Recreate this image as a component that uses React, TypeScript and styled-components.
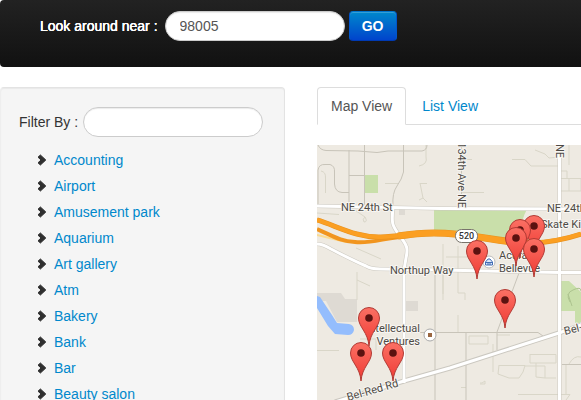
import React from "react";
import styled, { createGlobalStyle, css } from "styled-components";

const GlobalStyle = createGlobalStyle`
  *, *::before, *::after { box-sizing: border-box; }
  html, body { margin: 0; height: 100%; overflow: hidden; background: #fff; }
  body, input, button {
    font-family: "Liberation Sans", Arial, sans-serif;
    font-size: 14px;
    line-height: 20px;
    color: #333;
  }
  a { color: #08c; text-decoration: none; }
`;

const Header = styled.form`
  display: flex;
  align-items: center;
  padding: 11px 40px 26px;
  border-radius: 4px 0 0 4px;
  background: linear-gradient(to bottom, #222, #111);
`;

const FieldLabel = styled.label<{ $light?: boolean }>`
  flex: none;
  margin-right: 5px;
  ${(p) =>
    p.$light &&
    css`
      margin-right: 7px;
      color: #fff;
      text-shadow: 0 0 0 #fff, 0 0 0 #fff;
    `}
`;

const RoundInput = styled.input`
  width: 180px;
  height: 30px;
  padding: 4px 14px;
  border: 1px solid #ccc;
  border-radius: 15px;
  background: #fff;
  color: #555;
  box-shadow: inset 0 1px 1px rgba(0, 0, 0, 0.08);
  outline: none;
`;

const GoButton = styled.button`
  height: 30px;
  min-width: 48px;
  margin-left: 4px;
  padding: 4px 12px;
  border: 1px solid;
  border-color: #0074cc #05c #003ab3;
  border-radius: 4px;
  background: linear-gradient(to bottom, #08c, #04c);
  color: #fff;
  font-weight: bold;
  box-shadow: inset 0 1px 0 rgba(255, 255, 255, 0.2);
`;

const Content = styled.div`
  display: flex;
  align-items: flex-start;
  gap: 32px;
  margin-top: 20px;
`;

const Sidebar = styled.aside`
  flex: none;
  width: 285px;
  padding: 19px 18px;
  border: 1px solid #e3e3e3;
  border-left-color: #eee;
  border-radius: 4px;
  background: #f5f5f5;
  box-shadow: inset 0 1px 1px rgba(0, 0, 0, 0.05);
`;

const FilterRow = styled.div`
  display: flex;
  align-items: center;
`;

const CategoryList = styled.ul`
  margin: 10px 0 0;
  padding: 0 0 0 18px;
  list-style: none;
`;

const Category = styled.li`
  display: flex;
  align-items: center;
  gap: 7px;
  height: 26px;
`;

const Main = styled.main`
  flex: 1;
  min-width: 0;
`;

const Tabs = styled.nav`
  display: flex;
  gap: 2px;
  border-bottom: 1px solid #ddd;
  margin-bottom: 20px;
`;

const Tab = styled.a<{ $active?: boolean }>`
  padding: 8px 13px;
  margin-bottom: -1px;
  border: 1px solid transparent;
  border-radius: 4px 4px 0 0;
  ${(p) =>
    p.$active &&
    css`
      color: #555;
      background: #fff;
      border-color: #ddd #ddd #fff;
    `}
`;

const MapCanvas = styled.svg`
  display: block;
  width: 100%;
  background: #eeeae2;
`;

const MapLabel = styled.text`
  font-family: Roboto, sans-serif;
  font-size: 11px;
  fill: #4d4a45;
  stroke: #f8f6f2;
  stroke-width: 2px;
  stroke-linejoin: round;
  paint-order: stroke;
`;

const RouteNumber = styled.text`
  font-family: Roboto, sans-serif;
  font-size: 9px;
  font-weight: 500;
  fill: #333;
`;

const categories = [
  "Accounting",
  "Airport",
  "Amusement park",
  "Aquarium",
  "Art gallery",
  "Atm",
  "Bakery",
  "Bank",
  "Bar",
  "Beauty salon",
];

const pins = [
  [534, 226],
  [520, 230],
  [516, 238],
  [534, 249],
  [477, 251],
  [505, 300],
  [369, 318],
  [361, 353],
  [393, 353],
];

const whiteRoads = [
  "M317 206L441 208.500L581 209",
  "M393 208C391 225 393 226 399 235C408 246 408 249 406 258L404 270V383",
  "M317 244Q323 244 331 249Q352 260 366 266Q371 269 380 269L441 270L560 272.500H581",
  "M559.500 145V400",
];

const minorRoads = [
  "M318 145Q320 150 326 150.500L358 151L377 152.500L388 151H422Q427 150 427 145",
  "M349 150V206M364.500 145V206M349 175.500H364",
  "M403.500 145V172Q402 179 397 186T393 206",
  "M318 206V170Q319 164 325 164.500H330Q335 166 334.500 172V184Q335 192 342 192.500H349",
  "M461.500 145V208M435 272V400",
  "M403 332.500H538L543 336",
  "M466 333V400M519 273L497 332M497 333V350M562 364.500H581",
];

const faintRoads = [
  "M321 171Q326 172 325.500 178V193M317 213L339 214.500",
  "M419 166Q428 164 426 157V145M385 183.500H398M420 183L423 198L419 200M420 183.500H427M423 198L427 202",
  "M349 206Q362 215 365 217Q368 222 364 222Q362 219 365 217",
  "M356 248L381 259M357 272V300M357 280L370 286M317 350.500H339",
  "M461 159.500H472M461 192.500H484M512 159.500H525L531 166H559M535 150L545 154L549 158L559 157",
  "M559 171H567V178M561 178.500H581V191H561M569 178V191M443 244V300M458 246V293H465V300M458 315V332",
  "M488 336V344H469V336H488M497 335H510M493 344V372M530 354.500H556V363H530V354",
  "M499 365.500H525L523 372L519 378H509L498 374L499 365M536 363V377L545 378V366H525M545 378H556",
  "M461 387.500H466M480 383H482L485 381V384H480M566 364V395M518 394.500H570L566 400M569 364Q574 355 581 357",
  "M360 339H376V350M446 257H476M569 145V165M443 273V294",
];

const belRedRoad = "M335 402L404 381L450 368L559 333L581 325";
const highwayUpper = "M317 220C337 226 357 238 381 237C402 236 414 233 434 233C474 233 497 243 531 243Q557 242 581 234";
const highwayLower = "M317 229C335 237 340 241 355 242C372 244 386 237 410 236";
const highwayMerged = "M398 236Q418 233 434 233C474 233 497 243 531 243";

function Chevron() {
  return (
    <svg width="10" height="12" viewBox="0 0 10 12" aria-hidden="true">
      <path d="M1 3.200L3.400 1L8.800 6L3.400 11L1 8.800L4 6Z" fill="#2f2f2f" stroke="#2f2f2f" strokeWidth="1" strokeLinejoin="round" />
    </svg>
  );
}

function Pin({ x, y }: { x: number; y: number }) {
  return (
    <g transform={`translate(${x} ${y})`}>
      <path
        d="M0 28C-1 14-10.500 9-10.500 0A10.500 10.500 0 0 1 10.500 0C10.500 9 1 14 0 28Z"
        fill="url(#pinFill)"
        stroke="#b13a34"
        strokeWidth="1"
      />
      <circle r="3.800" fill="#5c1210" />
    </g>
  );
}

function PlacesMap() {
  return (
    <MapCanvas viewBox="317 145 264 255" role="img" aria-label="Map of places near 98005">
      <defs>
        <linearGradient id="pinFill" x1="0" y1="0" x2="0" y2="1">
          <stop offset="0" stopColor="#fb7064" />
          <stop offset="1" stopColor="#ef3b34" />
        </linearGradient>
      </defs>
      <g fill="#c9dfaa">
        <path d="M365 175H378V193H365Z" />
        <path d="M434 209H527Q521 220 519 239L495 238L466 231H434Z" />
        <path d="M561 281H569L581 292V323H575V311H561Z" />
      </g>
      <path d="M570 302Q565 293 573 290Q581 286 581 291M568 294L572 306" fill="none" stroke="#adc48f" />
      <g fill="#dedad3">
        <path d="M317 293H341L345 299H357V322H337L326 301H317Z" />
        <path d="M405 301H418V311H405ZM399 209H405V215H399Z" />
      </g>
      <path d="M317 296L320 297L332 315L337 323L349 324Q354 325 354 330Q353 335 348 335L335 334L328 326L317 308Z" fill="#94bdfd" />
      <g fill="none">
        {faintRoads.map((d) => <path key={d} d={d} stroke="#d9d6c8" />)}
        {minorRoads.map((d) => <path key={d} d={d} stroke="#c8c4b9" />)}
        {whiteRoads.map((d) => <path key={d} d={d} stroke="#cbc8c0" strokeWidth="4" />)}
        <path d={belRedRoad} stroke="#cbc8c0" strokeWidth="5" />
        {whiteRoads.map((d) => <path key={d} d={d} stroke="#fff" strokeWidth="3" />)}
        <path d={belRedRoad} stroke="#fff" strokeWidth="3" />
        <path d="M317 235L346 242" stroke="#fbdb91" strokeWidth="2" />
        <path d={highwayLower} stroke="#f1951f" strokeWidth="4" />
        <path d={highwayUpper} stroke="#e8921f" strokeWidth="5" />
        <path d={highwayUpper} stroke="#fb9f22" strokeWidth="4" />
        <path d={highwayMerged} stroke="#e89420" strokeWidth="7" />
        <path d={highwayMerged} stroke="#fb9f22" strokeWidth="6" />
      </g>
      <MapLabel x="341" y="211">NE 24th St</MapLabel>
      <MapLabel x="547" y="212">NE 24th St</MapLabel>
      <MapLabel x="390" y="274">Northup Way</MapLabel>
      <MapLabel transform="translate(458 208) rotate(90)" textAnchor="end">134th Ave NE</MapLabel>
      <MapLabel transform="translate(556 158) rotate(90)" textAnchor="end">NE</MapLabel>
      <MapLabel x="541" y="228">Skate King</MapLabel>
      <MapLabel x="499" y="259">Acura</MapLabel>
      <MapLabel x="499" y="272">Bellevue</MapLabel>
      <MapLabel x="420" y="332" textAnchor="end">Intellectual</MapLabel>
      <MapLabel x="420" y="345" textAnchor="end">Ventures</MapLabel>
      <MapLabel transform="translate(348 401) rotate(-16)">Bel-Red Rd</MapLabel>
      <MapLabel transform="translate(565 335) rotate(-14)">Bel-Red Rd</MapLabel>
      <rect x="455.500" y="229.500" width="22" height="13" rx="6" fill="#fff" stroke="#78736b" />
      <RouteNumber x="466.500" y="239" textAnchor="middle">520</RouteNumber>
      <circle cx="489" cy="262" r="6" fill="#fff" stroke="#bbb" />
      <path d="M485.500 265V262L488 259H490L492.500 262V265ZM486 262.500H492M488 265V262.500M490 265V262.500" fill="#dce7f8" stroke="#416db5" />
      <circle cx="430" cy="335" r="6" fill="#fff" stroke="#aaa" />
      <path d="M428 333H432V337H428Z" fill="#9a6641" />
      {pins.map(([x, y]) => <Pin key={`${x}-${y}`} x={x} y={y} />)}
    </MapCanvas>
  );
}

export default function App() {
  return (
    <>
      <GlobalStyle />
      <Header onSubmit={(e) => e.preventDefault()}>
        <FieldLabel $light htmlFor="near">Look around near :</FieldLabel>
        <RoundInput id="near" type="text" defaultValue="98005" />
        <GoButton type="submit">GO</GoButton>
      </Header>
      <Content>
        <Sidebar>
          <FilterRow>
            <FieldLabel htmlFor="filter">Filter By :</FieldLabel>
            <RoundInput id="filter" type="text" />
          </FilterRow>
          <CategoryList>
            {categories.map((name) => (
              <Category key={name}>
                <Chevron />
                <a href="#places">{name}</a>
              </Category>
            ))}
          </CategoryList>
        </Sidebar>
        <Main id="places">
          <Tabs>
            <Tab $active href="#map" aria-current="page">Map View</Tab>
            <Tab href="#list">List View</Tab>
          </Tabs>
          <PlacesMap />
        </Main>
      </Content>
    </>
  );
}
